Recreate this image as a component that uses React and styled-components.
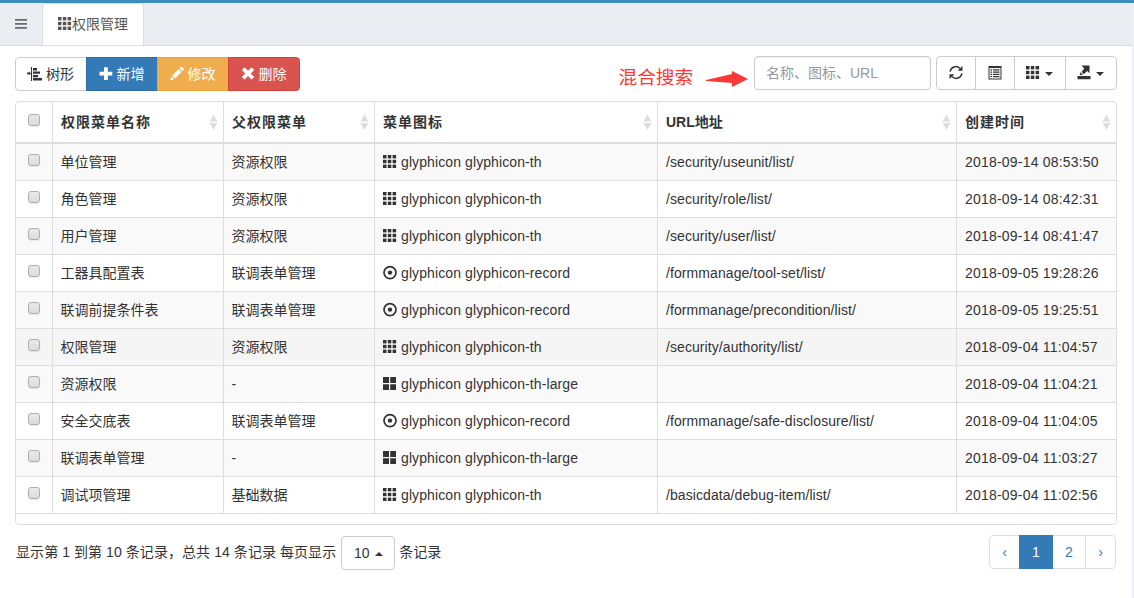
import React from "react";
import styled, { createGlobalStyle, css } from "styled-components";

const GlobalStyle = createGlobalStyle`
  * { box-sizing: border-box; }
  body {
    margin: 0;
    background: #ecf0f5;
    color: #333;
    font: 14px/20px "Liberation Sans", Arial, "Noto Sans CJK SC", sans-serif;
  }
  button, input { font: inherit; color: inherit; margin: 0; }
`;

const Page = styled.div`
  width: 1132px;
  height: 598px;
  background: #fff;
`;
const TopLine = styled.div`
  width: 1134px;
  height: 3px;
  background: #3c8dbc;
`;
const TabBar = styled.nav`
  display: flex;
  height: 43px;
  background: #eaeef3;
  border-bottom: 1px solid #ddd;
`;
const MenuToggle = styled.button`
  width: 42px;
  padding: 0;
  border: 0;
  background: none;
  display: flex;
  align-items: center;
  justify-content: center;
  color: #6b6b6b;
`;
const Tab = styled.div`
  display: flex;
  align-items: center;
  width: 102px;
  height: 42px;
  padding: 0 0 2px 15px;
  border: 1px solid #ddd;
  border-bottom: 0;
  border-radius: 4px 4px 0 0;
  background: #fff;
  color: #555;
`;
const Content = styled.main`
  padding: 10px 15px 0;
`;
const Toolbar = styled.div`
  display: flex;
  height: 45px;
  align-items: flex-start;
`;
const ButtonGroup = styled.div`
  display: flex;
`;
const ActionGroup = styled(ButtonGroup)`
  margin-top: 1px;
`;
const ToolGroup = styled(ButtonGroup)`
  margin-left: 5px;
`;
const tones = {
  plain: ["#fff", "#ccc", "#333"],
  primary: ["#337ab7", "#2e6da4", "#fff"],
  warning: ["#f0ad4e", "#eea236", "#fff"],
  danger: ["#d9534f", "#d43f3a", "#fff"],
};
const Button = styled.button`
  display: flex;
  align-items: center;
  justify-content: center;
  height: 34px;
  width: ${(p) => p.$width}px;
  padding: 0 1px 0 0;
  gap: ${(p) => p.$gap || 4}px;
  white-space: nowrap;
  background: ${(p) => tones[p.$tone || "plain"][0]};
  border: 1px solid ${(p) => tones[p.$tone || "plain"][1]};
  color: ${(p) => tones[p.$tone || "plain"][2]};
  & + & { margin-left: -1px; }
  &:first-child { border-radius: 4px 0 0 4px; }
  &:last-child { border-radius: 0 4px 4px 0; }
  &:only-child { border-radius: 4px; padding: 0; }
`;
const Hint = styled.div`
  display: flex;
  align-items: center;
  margin-left: auto;
  height: 44px;
  color: #fb3838;
  font-size: 18.6px;
`;
const HintArrow = styled.svg`
  margin: 2px 6px 0 13px;
`;
const Search = styled.input`
  width: 177px;
  height: 34px;
  padding: 6px 11px;
  border: 1px solid #ccc;
  border-radius: 4px;
  background: #fff;
  box-shadow: inset 0 1px 1px rgba(0, 0, 0, 0.075);
  &::placeholder { color: #999; opacity: 1; }
`;
const Caret = styled.span`
  border: 4px solid transparent;
  margin-top: 1px;
  ${(p) =>
    p.$up
      ? css`border-top: 0; border-bottom-color: #333;`
      : css`border-bottom: 0; border-top-color: #333;`}
`;
const TableBox = styled.div`
  width: 1102px;
  height: 424px;
  border: 1px solid #ddd;
  border-radius: 4px;
`;
const Table = styled.table`
  width: 100%;
  table-layout: fixed;
  border-collapse: separate;
  border-spacing: 0;
`;
const cell = css`
  border-right: 1px solid #ddd;
  padding: 0 8px;
  text-align: left;
  white-space: nowrap;
  &:last-child { border-right: 0; }
`;
const HeadCell = styled.th`
  ${cell}
  height: 42px;
  border-bottom: 2px solid #ddd;
`;
const HeadInner = styled.div`
  display: flex;
  align-items: center;
  justify-content: space-between;
  margin-right: -3px;
`;
const HeadText = styled.span`
  letter-spacing: ${(p) => (p.$latin ? 0 : 1)}px;
`;
const Row = styled.tr`
  background: ${(p) => p.$fill};
`;
const Cell = styled.td`
  ${cell}
  height: 37px;
  border-bottom: 1px solid #ddd;
  padding-bottom: 1px;
  letter-spacing: ${(p) => p.$spacing || 0}px;
`;
const NameCell = styled(Cell)`
  padding-left: 7.5px;
`;
const IconText = styled.span`
  display: flex;
  align-items: center;
  gap: 4px;
`;
const Check = styled.span`
  display: block;
  width: 12px;
  height: 12px;
  margin: ${(p) => (p.$head ? "-4px" : "-3px")} 0 0 4px;
  border: 1px solid #adadad;
  border-radius: 3px;
  background: linear-gradient(#e9e9e9, #dcdcdc);
  box-shadow: 0 1px 1px rgba(0, 0, 0, 0.08);
`;
const Footer = styled.footer`
  display: flex;
  justify-content: space-between;
  padding: 10px 1px 0 1px;
`;
const Summary = styled.div`
  display: flex;
  align-items: center;
  height: 34px;
  white-space: pre;
`;
const SummaryText = styled.span`
  letter-spacing: 0.07px;
`;
const PageSize = styled.div`
  margin: 2px 4px 0 5px;
`;
const Pager = styled.div`
  display: flex;
`;
const PageLink = styled.button`
  width: ${(p) => p.$width}px;
  height: 34px;
  padding: 0;
  border: 1px solid ${(p) => (p.$active ? "#337ab7" : "#ddd")};
  background: ${(p) => (p.$active ? "#337ab7" : "#fff")};
  color: ${(p) => (p.$active ? "#fff" : "#337ab7")};
  position: relative;
  z-index: ${(p) => (p.$active ? 1 : 0)};
  & + & { margin-left: -1px; }
  &:first-child { border-radius: 4px 0 0 4px; }
  &:last-child { border-radius: 0 4px 4px 0; }
`;

const Svg = styled.svg`
  flex: none;
  display: block;
  overflow: visible;
  fill: currentColor;
`;
const SortSvg = styled(Svg)`
  color: #ddd;
`;
const Icon = ({ w = 14, children }) => (
  <Svg width={w} height="14" viewBox={`0 0 ${w} 14`}>{children}</Svg>
);
const steps = [0, 4.8, 9.6];
const Th = () => (
  <Icon>
    {steps.map((y) => steps.map((x) => (
      <rect key={`${x}-${y}`} x={x} y={y} width="3.5" height="3.4" />
    )))}
  </Icon>
);
const ThLarge = () => (
  <Icon>
    <path d="M0 0h6v6H0zM7.200 0h5.800v6H7.200zM0 7.200h6V13H0zM7.200 7.200h5.800V13H7.200z" />
  </Icon>
);
const Record = () => (
  <Icon>
    <circle cx="7" cy="6.6" r="6" fill="none" stroke="currentColor" strokeWidth="1.7" />
    <circle cx="7" cy="6.6" r="2.2" />
  </Icon>
);
const Bars = () => (
  <Icon w={12}>
    <path d="M0 2h12v1.700H0zM0 6h12v1.700H0zM0 10h12v1.700H0z" />
  </Icon>
);
const Tree = () => (
  <Icon w={15}>
    <path d="M0 5.600h2V4.500l2 1.900-2 1.900V7.200H0zM4 0h1v14H4zM6 1h4v2.500H6zM6 4.500h7v2.300H6zM6 8h5v2.200H6zM6 11h9v2.500H6z" />
  </Icon>
);
const Plus = () => (
  <Icon>
    <path d="M5 .2h3.800v4.500h4.500v3.800H8.800V13H5V8.500H.5V4.700H5z" />
  </Icon>
);
const Pencil = () => (
  <Icon>
    <path d="M10.700 0q.7-.7 1.400 0l1.500 1.500q.7.7 0 1.400l-1.300 1.300-2.900-2.900zM8.600 2.100l2.900 2.900-6.600 6.600-2.900-2.900zM1.300 9.500l2.800 2.800L0 13.400z" />
  </Icon>
);
const Remove = () => (
  <Icon>
    <path d="M3.500 .2L7 3.700 10.500 .2 13.200 2.900 9.700 6.400l3.500 3.500-2.700 2.700L7 9.100l-3.500 3.500L.8 9.900 4.300 6.400 .8 2.900z" />
  </Icon>
);
const Refresh = () => (
  <Icon>
    <path d="M1.100 5.700A5.800 5.800 0 0 1 11 2.400M12.900 7.300A5.800 5.800 0 0 1 3 10.600" fill="none" stroke="currentColor" strokeWidth="1.500" />
    <path d="M13.500 0v4.700H8.700zM.5 13V8.300h4.800z" />
  </Icon>
);
const ListAlt = () => (
  <Icon>
    <path fillRule="evenodd" d="M.5 0h13v13.500H.5zM1.500 2v10.500h11V2z" />
    <path d="M2.500 3.200h1.500v1.200H2.500zM5 3.200h6.500v1.200H5zM2.500 5.500h1.500v1.200H2.500zM5 5.500h6.500v1.200H5zM2.500 7.800h1.500v1.200H2.500zM5 7.800h6.500v1.200H5zM2.500 10.100h1.500v1.200H2.500zM5 10.100h6.500v1.200H5z" />
  </Icon>
);
const Export = () => (
  <Icon>
    <path d="M4.500 -.5h8v7.700L10.200 5 6.800 8.300 4.500 6 7.200 2.600zM3.300 6.200l2.600 2.700H2.700zM.5 10h13v3.300H.5z" />
  </Icon>
);
const SortArrows = () => (
  <SortSvg width="9" height="16" viewBox="0 0 9 16">
    <path d="M4.500 0.500L8.500 7.500h-8zM.5 9h8l-4 7z" />
  </SortSvg>
);

const icons = { th: Th, record: Record, "th-large": ThLarge };
const columns = [
  ["权限菜单名称", 171],
  ["父权限菜单", 151],
  ["菜单图标", 283],
  ["URL地址", 299],
  ["创建时间", 159],
];
const rows = [
  ["单位管理", "资源权限", "th", "/security/useunit/list/", "2018-09-14 08:53:50"],
  ["角色管理", "资源权限", "th", "/security/role/list/", "2018-09-14 08:42:31"],
  ["用户管理", "资源权限", "th", "/security/user/list/", "2018-09-14 08:41:47"],
  ["工器具配置表", "联调表单管理", "record", "/formmanage/tool-set/list/", "2018-09-05 19:28:26"],
  ["联调前提条件表", "联调表单管理", "record", "/formmanage/precondition/list/", "2018-09-05 19:25:51"],
  ["权限管理", "资源权限", "th", "/security/authority/list/", "2018-09-04 11:04:57"],
  ["资源权限", "-", "th-large", "", "2018-09-04 11:04:21"],
  ["安全交底表", "联调表单管理", "record", "/formmanage/safe-disclosure/list/", "2018-09-04 11:04:05"],
  ["联调表单管理", "-", "th-large", "", "2018-09-04 11:03:27"],
  ["调试项管理", "基础数据", "th", "/basicdata/debug-item/list/", "2018-09-04 11:02:56"],
];
const hovered = 5;
const rowFill = (i) => (i === hovered ? "#f5f5f5" : i % 2 ? "#fff" : "#f9f9f9");

export default function App() {
  return (
    <>
      <GlobalStyle />
      <Page>
        <TopLine />
        <TabBar>
          <MenuToggle><Bars /></MenuToggle>
          <Tab><Th />权限管理</Tab>
        </TabBar>
        <Content>
          <Toolbar>
            <ActionGroup>
              <Button $width={72}><Tree />树形</Button>
              <Button $width={72} $tone="primary"><Plus />新增</Button>
              <Button $width={72} $tone="warning"><Pencil />修改</Button>
              <Button $width={72} $tone="danger"><Remove />删除</Button>
            </ActionGroup>
            <Hint>
              混合搜索
              <HintArrow width="42" height="16" viewBox="0 0 42 16">
                <path d="M0 9L26 3V0L42 8 26 16V12L0 10z" fill="#fb3838" />
              </HintArrow>
            </Hint>
            <Search placeholder="名称、图标、URL" />
            <ToolGroup>
              <Button $width={40}><Refresh /></Button>
              <Button $width={40}><ListAlt /></Button>
              <Button $width={52} $gap={5}><Th /><Caret /></Button>
              <Button $width={52} $gap={5}><Export /><Caret /></Button>
            </ToolGroup>
          </Toolbar>
          <TableBox>
            <Table>
              <colgroup>
                <col style={{ width: 37 }} />
                {columns.map(([name, width]) => <col key={name} style={{ width }} />)}
              </colgroup>
              <thead>
                <tr>
                  <HeadCell><Check $head /></HeadCell>
                  {columns.map(([name]) => (
                    <HeadCell key={name}>
                      <HeadInner>
                        <HeadText $latin={name.startsWith("URL")}>{name}</HeadText>
                        <SortArrows />
                      </HeadInner>
                    </HeadCell>
                  ))}
                </tr>
              </thead>
              <tbody>
                {rows.map(([name, parent, icon, url, time], i) => {
                  const Glyph = icons[icon];
                  return (
                    <Row key={name} $fill={rowFill(i)}>
                      <Cell><Check /></Cell>
                      <NameCell>{name}</NameCell>
                      <NameCell>{parent}</NameCell>
                      <Cell $spacing={0.1}>
                        <IconText><Glyph /><span>glyphicon glyphicon-{icon}</span></IconText>
                      </Cell>
                      <Cell $spacing={0.08}>{url}</Cell>
                      <Cell $spacing={0.2}>{time}</Cell>
                    </Row>
                  );
                })}
              </tbody>
            </Table>
          </TableBox>
          <Footer>
            <Summary>
              <SummaryText>显示第 1 到第 10 条记录，总共 14 条记录 每页显示</SummaryText>
              <PageSize><Button $width={54} $gap={5}>10<Caret $up /></Button></PageSize>
              条记录
            </Summary>
            <Pager>
              <PageLink $width={31}>‹</PageLink>
              <PageLink $width={34} $active>1</PageLink>
              <PageLink $width={34}>2</PageLink>
              <PageLink $width={31}>›</PageLink>
            </Pager>
          </Footer>
        </Content>
      </Page>
    </>
  );
}
